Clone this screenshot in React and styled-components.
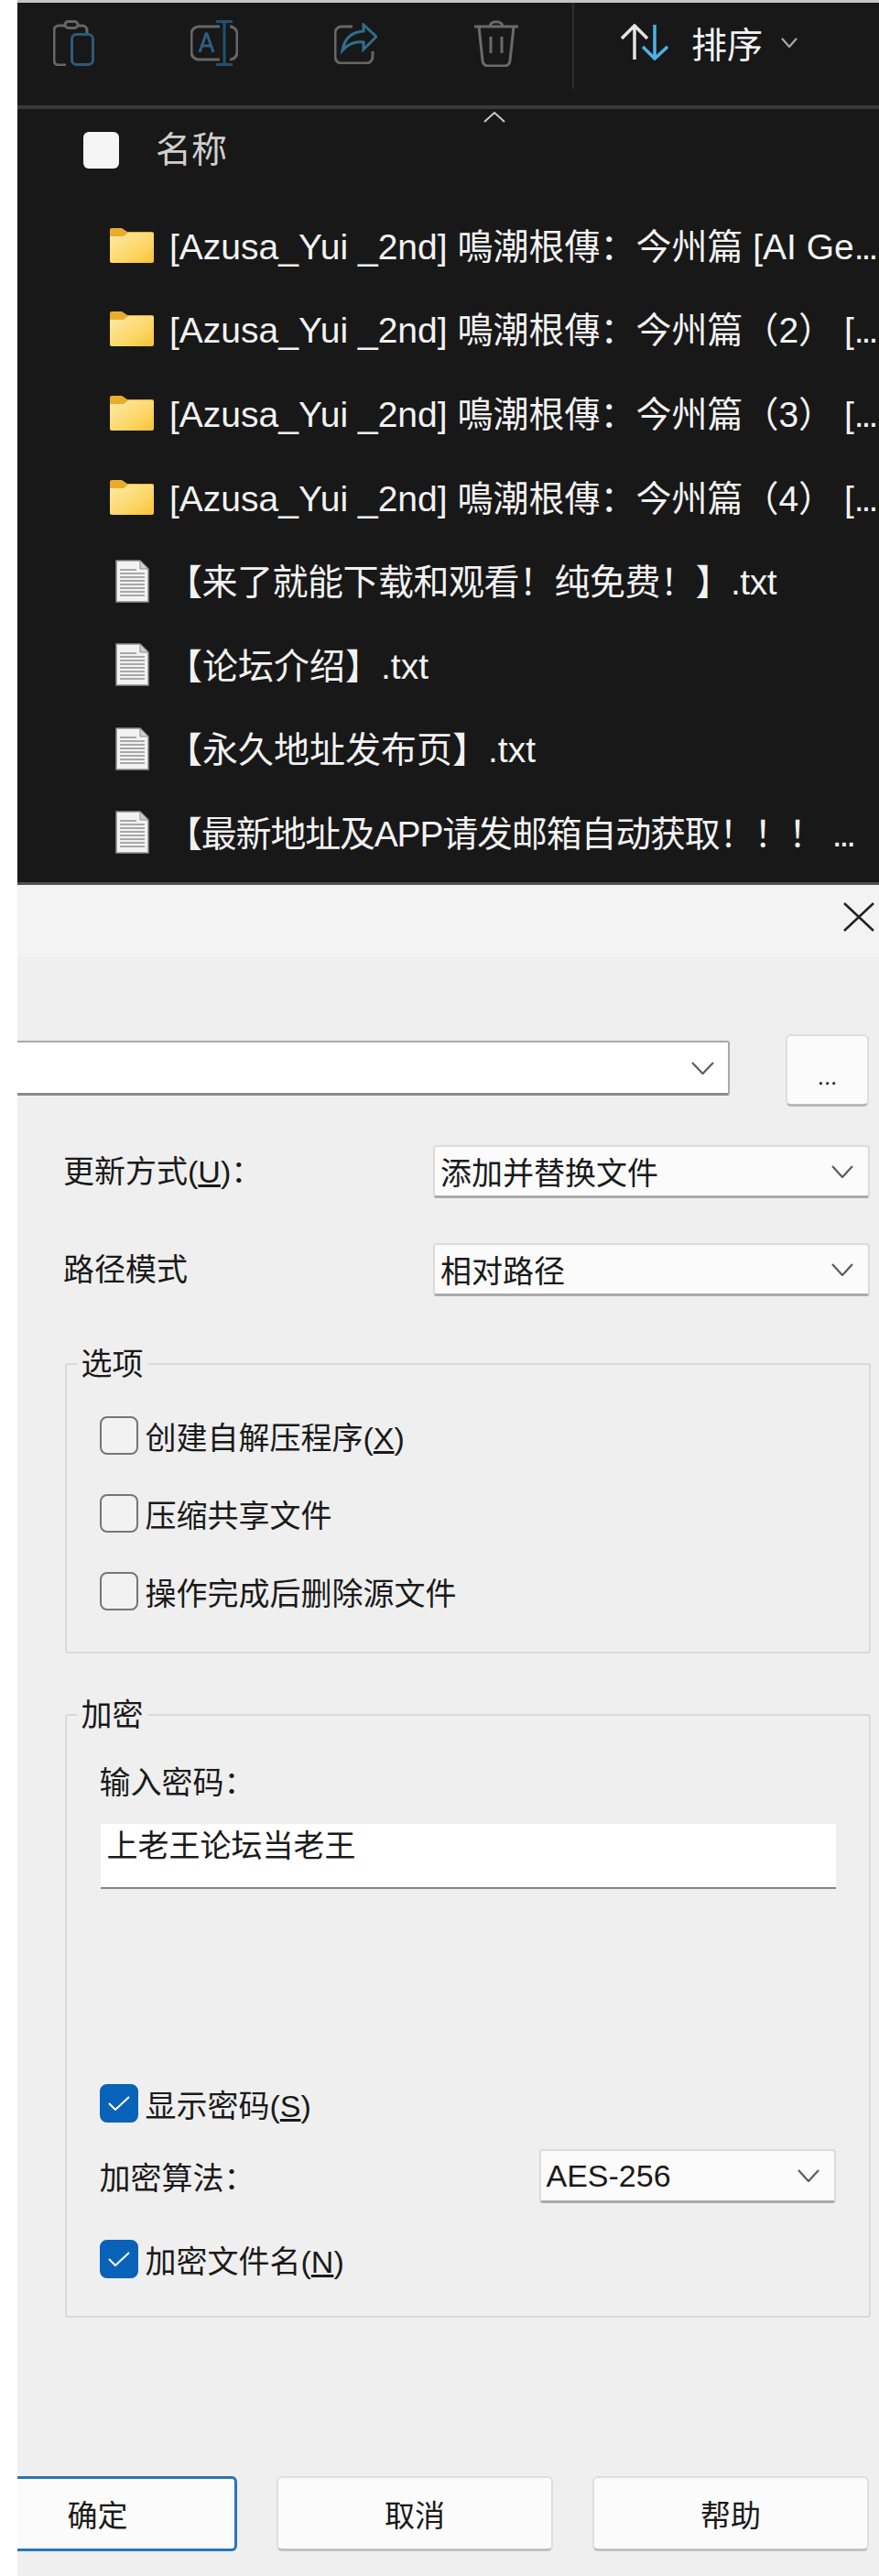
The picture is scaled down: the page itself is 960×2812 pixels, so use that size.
import React from 'react'
import styled, { createGlobalStyle } from 'styled-components'

const GlobalStyle = createGlobalStyle`
  * {
    box-sizing: border-box;
  }

  body {
    margin: 0;
    background: #fff;
    font-family: "Liberation Sans", "Noto Sans CJK SC", sans-serif;
  }
`

const Page = styled.div`
  width: 960px;
  height: 2812px;
  padding-left: 19px;
  overflow: hidden;
`

const Explorer = styled.section`
  height: 966px;
  background: #181818;
  border-top: 3px solid #c4c4c4;
  border-bottom: 3px solid #4f4f4f;
`

const Toolbar = styled.div`
  display: flex;
  height: 116px;
  padding-left: 35px;
  padding-bottom: 18px;
  gap: 102px;
  border-bottom: 4px solid #3a3a3a;
`

const ToolSlot = styled.div`
  display: flex;
  align-items: center;
  justify-content: center;
  width: 52px;
  padding-bottom: 6px;
`

const Divider = styled.div`
  width: 2px;
  margin-left: -45px;
  background: #2e2e2e;
`

const SortButton = styled.div`
  display: flex;
  align-items: center;
  margin-left: -51px;
  padding-bottom: 8px;
  color: #f4f4f4;
  font-size: 39px;
`

const SortLabel = styled.span`
  margin: 0 20px 0 25px;
`

const Header = styled.div`
  position: relative;
  display: flex;
  align-items: flex-start;
  height: 101px;
  padding: 25px 0 0 72px;
`

const SortCaret = styled.svg`
  position: absolute;
  left: 509px;
  top: 3px;
`

const HeaderBox = styled.div`
  width: 39px;
  height: 40px;
  background: #f5f5f5;
  border-radius: 6px;
`

const HeaderLabel = styled.span`
  margin-left: 40px;
  color: #cfcfcf;
  font-size: 39px;
  line-height: 40px;
`

const Row = styled.div`
  display: flex;
  align-items: center;
  height: 91.6px;
  padding-left: 101px;
  color: #f2f2f2;
  font-size: 39px;
  letter-spacing: ${({ $spacing = 0 }) => $spacing}px;
  white-space: nowrap;
`

const RowIcon = styled.div`
  display: flex;
  justify-content: center;
  flex: none;
  width: 48px;
  margin: 4px ${({ $gap }) => $gap}px 0 0;
`

const Dots = styled.span`
  letter-spacing: -3px;
`

const Dialog = styled.section`
  background: #efefef;
  height: 1846px;
  color: #1a1a1a;
  font-size: 34px;
`

const TitleBand = styled.div`
  display: flex;
  justify-content: flex-end;
  height: 79px;
  padding: 19px 5px 0 0;
  background: #f3f3f3;
`

const PathRow = styled.div`
  display: flex;
  align-items: flex-start;
  margin-top: 84px;
`

const PathCombo = styled.div`
  display: flex;
  align-items: center;
  justify-content: flex-end;
  width: 778px;
  height: 60px;
  margin-top: 7px;
  padding-right: 15px;
  background: #fff;
  border: 2px solid #a8a8a8;
  border-left: none;
  border-bottom: 3px solid #8c8c8c;
  border-radius: 0 3px 3px 0;
`

const BrowseButton = styled.div`
  display: flex;
  align-items: flex-end;
  justify-content: center;
  width: 91px;
  height: 79px;
  margin-left: 61px;
  padding-bottom: 17px;
  background: #fbfbfb;
  border: 2px solid #dedede;
  border-bottom: 3px solid #b8b8b8;
  border-radius: 6px;
  font-size: 26px;
  line-height: 1;
`

const FormRow = styled.div`
  display: flex;
  align-items: center;
  width: 881px;
  margin: ${({ $top }) => $top}px 0 0 50px;
`

const FormLabel = styled.span`
  width: 404px;
  line-height: 34px;
`

const SelectBox = styled.div`
  display: flex;
  align-items: center;
  justify-content: space-between;
  flex: none;
  width: ${({ $width }) => $width}px;
  height: ${({ $height }) => $height}px;
  padding: 0 16px 0 6px;
  background: #fbfbfb;
  border: 2px solid #dcdcdc;
  border-bottom: 3px solid #ababab;
  border-radius: 4px;
`

const Group = styled.fieldset`
  width: 880px;
  height: ${({ $height }) => $height}px;
  margin: ${({ $top }) => $top}px 0 0 51.5px;
  padding: 0 36px 0 36px;
  border: 2px solid #dadada;
  border-radius: 3px;
`

const GroupTitle = styled.legend`
  margin-left: -25px;
  padding: 0 5px;
  line-height: 34px;
`

const CheckRow = styled.div`
  display: flex;
  align-items: center;
  height: 42px;
  margin-top: ${({ $top }) => $top}px;
`

const CheckBox = styled.div`
  display: flex;
  align-items: center;
  justify-content: center;
  flex: none;
  width: 42px;
  height: 42px;
  margin-right: 8px;
  background: ${({ $checked }) => ($checked ? '#0863b8' : '#f2f2f2')};
  border: 2.5px solid ${({ $checked }) => ($checked ? '#0863b8' : '#767676')};
  border-radius: 8px;
`

const FieldLabel = styled.div`
  margin-top: 40px;
  line-height: 34px;
`

const PasswordInput = styled.div`
  height: 71px;
  margin: 28px 0 0 1px;
  padding: 6px 7px 0;
  background: #fff;
  border-bottom: 2px solid #858585;
  line-height: 36px;
`

const AlgoRow = styled.div`
  display: flex;
  align-items: center;
  justify-content: space-between;
  margin-top: 29px;
`

const Footer = styled.div`
  display: flex;
  gap: 43px;
  margin-top: 173px;
`

const DialogButton = styled.div`
  display: flex;
  align-items: center;
  justify-content: center;
  width: 302px;
  height: 82px;
  background: #fbfbfb;
  border: 2px solid #dedede;
  border-bottom: 3px solid #c2c2c2;
  border-radius: 6px;
  font-size: 33px;
`

const PrimaryButton = styled(DialogButton)`
  width: 240px;
  padding-right: 62px;
  border: 3px solid #2a76b4;
  border-left: none;
  border-radius: 0 6px 6px 0;
`

const Chevron = ({ width = 24, height = 14, color = '#5c5c5c', stroke = 2.2 }) => (
  <svg width={width} height={height} viewBox={`0 0 ${width} ${height}`} fill="none">
    <path
      d={`M1 1 L${width / 2} ${height - 1} L${width - 1} 1`}
      stroke={color}
      strokeWidth={stroke}
    />
  </svg>
)

const ClipboardIcon = () => (
  <svg width="45" height="50" viewBox="0 0 45 50" fill="none" strokeWidth="3">
    <path d="M14 49H6a5 5 0 0 1-5-5V11a5 5 0 0 1 5-5h6M27 6h5a5 5 0 0 1 5 5v3" stroke="#666" />
    <rect x="13" y="1.5" width="14" height="7" rx="3.5" stroke="#666" />
    <rect x="20.5" y="15.5" width="23" height="33" rx="5" stroke="#2f5a78" />
  </svg>
)

const RenameIcon = () => (
  <svg width="52" height="50" viewBox="0 0 52 50" fill="none" strokeWidth="3">
    <path d="M32 7H9a8 8 0 0 0-8 8v20a8 8 0 0 0 8 8h23M43 7a8 8 0 0 1 8 8v20a8 8 0 0 1-8 8" stroke="#666" />
    <path d="M37 1v48M28 1.5h18M28 48.5h18" stroke="#1f5172" />
    <path d="M10 35l7-20h1l7 20M12.5 28h10" stroke="#2f5f80" />
  </svg>
)

const ShareIcon = () => (
  <svg width="47" height="45" viewBox="0 0 47 45" fill="none" strokeWidth="3">
    <path d="M20 4H8a7 7 0 0 0-7 7v26a7 7 0 0 0 7 7h27a7 7 0 0 0 7-7v-6" stroke="#666" />
    <path d="M32 2L46 15 32 29v-8C22 20 15 23 9 30c2-12 9-20 23-21z" stroke="#2f6f8a" />
  </svg>
)

const TrashIcon = () => (
  <svg width="48" height="51" viewBox="0 0 48 51" fill="none" strokeWidth="3" stroke="#6a6a6a">
    <path d="M0 7h48M17 7c0-7 14-7 14 0M5 7l4 37a6 6 0 0 0 6 6h18a6 6 0 0 0 6-6l4-37M18 18v18M30 18v18" />
  </svg>
)

const SortIcon = () => (
  <svg width="52" height="40" viewBox="0 0 52 40" fill="none" strokeWidth="3.5">
    <path d="M15 39V2M1 16L15 2l14 14" stroke="#e4e4e4" />
    <path d="M37 1v36M24 25l13 13 14-13" stroke="#4fb0e4" />
  </svg>
)

const FolderIcon = () => (
  <svg width="48" height="38" viewBox="0 0 48 38">
    <defs>
      <linearGradient id="folderBody" x1="0" y1="0" x2="1" y2="1">
        <stop offset="0" stopColor="#fde9a8" />
        <stop offset="0.6" stopColor="#fcd768" />
        <stop offset="1" stopColor="#f8c232" />
      </linearGradient>
    </defs>
    <path d="M0 2a2 2 0 0 1 2-2h11l6 4h27a2 2 0 0 1 2 2v10H0z" fill="#e9ac2c" />
    <path d="M0 9h15l5-4h26a2 2 0 0 1 2 2v29a2 2 0 0 1-2 2H2a2 2 0 0 1-2-2z" fill="url(#folderBody)" />
  </svg>
)

const FileIcon = () => (
  <svg width="37" height="47" viewBox="0 0 37 47" fill="none">
    <path d="M1 1h26l9 9v36H1z" fill="#f2f2f2" stroke="#8c8c8c" strokeWidth="1.5" />
    <path d="M27 1v9h9z" fill="#cfcfcf" stroke="#8c8c8c" strokeWidth="1" />
    <path
      d="M5 11h18M5 15h27M5 19h27M5 23h27M5 27h27M5 31h27M5 35h27M5 39h27"
      stroke="#a8a8a8"
      strokeWidth="2"
    />
  </svg>
)

const CheckMark = () => (
  <svg width="24" height="16" viewBox="0 0 24 16" fill="none">
    <path d="M1 8l7 7L23 1" stroke="#fff" strokeWidth="2" />
  </svg>
)

const rows = [
  { icon: 'folder', name: '[Azusa_Yui _2nd] 鳴潮根傳：今州篇 [AI Ge', more: true },
  { icon: 'folder', name: '[Azusa_Yui _2nd] 鳴潮根傳：今州篇（2） [', more: true },
  { icon: 'folder', name: '[Azusa_Yui _2nd] 鳴潮根傳：今州篇（3） [', more: true },
  { icon: 'folder', name: '[Azusa_Yui _2nd] 鳴潮根傳：今州篇（4） [', more: true },
  { icon: 'file', name: '【来了就能下载和观看！纯免费！】.txt', spacing: -0.5 },
  { icon: 'file', name: '【论坛介绍】.txt' },
  { icon: 'file', name: '【永久地址发布页】.txt' },
  { icon: 'file', name: '【最新地址及APP请发邮箱自动获取！！！ ', more: true, spacing: -1.2 },
]

const Check = ({ checked, top, children }) => (
  <CheckRow $top={top}>
    <CheckBox $checked={checked}>{checked && <CheckMark />}</CheckBox>
    <span>{children}</span>
  </CheckRow>
)

const App = () => (
  <Page>
    <GlobalStyle />
    <Explorer>
      <Toolbar>
        <ToolSlot><ClipboardIcon /></ToolSlot>
        <ToolSlot><RenameIcon /></ToolSlot>
        <ToolSlot><ShareIcon /></ToolSlot>
        <ToolSlot><TrashIcon /></ToolSlot>
        <Divider />
        <SortButton>
          <SortIcon />
          <SortLabel>排序</SortLabel>
          <Chevron width={18} height={11} color="#a8a8a8" />
        </SortButton>
      </Toolbar>
      <Header>
        <SortCaret width="24" height="12" viewBox="0 0 24 12" fill="none">
          <path d="M1 11L12 1l11 10" stroke="#c8c8c8" strokeWidth="2" />
        </SortCaret>
        <HeaderBox />
        <HeaderLabel>名称</HeaderLabel>
      </Header>
      {rows.map(({ icon, name, more, spacing }) => (
        <Row key={name} $spacing={spacing}>
          <RowIcon $gap={icon === 'folder' ? 17 : 14}>
            {icon === 'folder' ? <FolderIcon /> : <FileIcon />}
          </RowIcon>
          <span>
            {name}
            {more && <Dots>...</Dots>}
          </span>
        </Row>
      ))}
    </Explorer>
    <Dialog>
      <TitleBand>
        <svg width="34" height="32" viewBox="0 0 34 32" fill="none">
          <path d="M1 1l32 30M33 1L1 31" stroke="#222" strokeWidth="2.5" />
        </svg>
      </TitleBand>
      <PathRow>
        <PathCombo><Chevron width={25} height={14} /></PathCombo>
        <BrowseButton>...</BrowseButton>
      </PathRow>
      <FormRow $top={42}>
        <FormLabel>更新方式(<u>U</u>)：</FormLabel>
        <SelectBox $width={477} $height={58}>
          添加并替换文件
          <Chevron />
        </SelectBox>
      </FormRow>
      <FormRow $top={49}>
        <FormLabel>路径模式</FormLabel>
        <SelectBox $width={477} $height={58}>
          相对路径
          <Chevron />
        </SelectBox>
      </FormRow>
      <Group $top={57} $height={333}>
        <GroupTitle>选项</GroupTitle>
        <Check top={40}>创建自解压程序(<u>X</u>)</Check>
        <Check top={43}>压缩共享文件</Check>
        <Check top={43}>操作完成后删除源文件</Check>
      </Group>
      <Group $top={50} $height={675}>
        <GroupTitle>加密</GroupTitle>
        <FieldLabel>输入密码：</FieldLabel>
        <PasswordInput>上老王论坛当老王</PasswordInput>
        <Check checked top={213}>显示密码(<u>S</u>)</Check>
        <AlgoRow>
          <span>加密算法：</span>
          <SelectBox $width={324} $height={59}>
            AES-256
            <Chevron />
          </SelectBox>
        </AlgoRow>
        <Check checked top={40}>加密文件名(<u>N</u>)</Check>
      </Group>
      <Footer>
        <PrimaryButton>确定</PrimaryButton>
        <DialogButton>取消</DialogButton>
        <DialogButton>帮助</DialogButton>
      </Footer>
    </Dialog>
  </Page>
)

export default App
